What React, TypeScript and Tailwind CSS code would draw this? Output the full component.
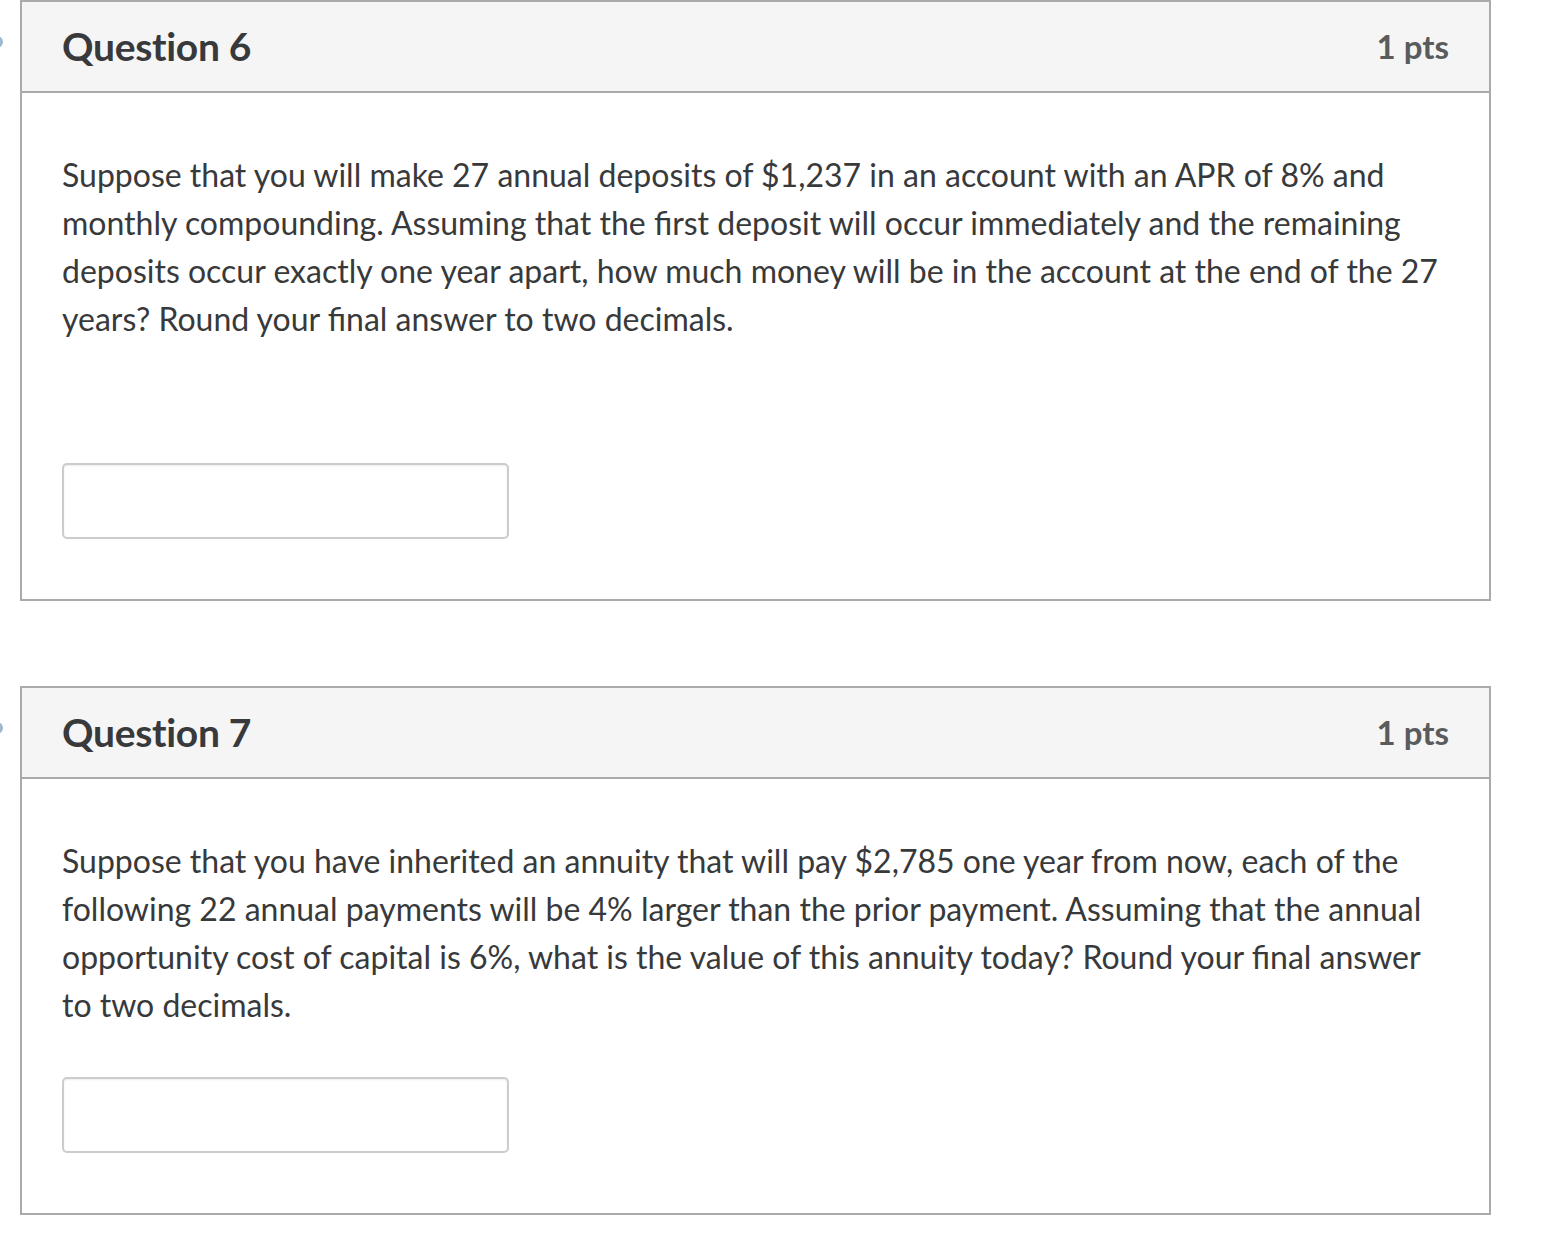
import React from "react";

type Q = {
  num: number;
  pts: string;
  text: string;
  gap: string;
};

const questions: Q[] = [
  {
    num: 6,
    pts: "1 pts",
    text: "Suppose that you will make 27 annual deposits of $1,237 in an account with an APR of 8% and monthly compounding. Assuming that the first deposit will occur immediately and the remaining deposits occur exactly one year apart, how much money will be in the account at the end of the 27 years? Round your final answer to two decimals.",
    gap: "mt-[120px]",
  },
  {
    num: 7,
    pts: "1 pts",
    text: "Suppose that you have inherited an annuity that will pay $2,785 one year from now, each of the following 22 annual payments will be 4% larger than the prior payment. Assuming that the annual opportunity cost of capital is 6%, what is the value of this annuity today? Round your final answer to two decimals.",
    gap: "mt-[48px]",
  },
];

function QuestionCard({ q }: { q: Q }) {
  return (
    <div className="relative">
      <div className="absolute -left-[29px] top-[36px] w-[12px] h-[12px] rounded-full bg-[#9fb8cf]" />
      <div className="w-[1471px] border-2 border-[#aaaaaa] bg-white">
        <div className="h-[91px] border-b-2 border-[#aaaaaa] bg-[#f5f5f5] flex items-center justify-between pl-[40px] pr-[40px]">
          <h2 className="text-[39px] font-bold text-[#38393b] tracking-[-0.3px]">Question {q.num}</h2>
          <div className="text-[33px] font-bold text-[#5a5b5d]">{q.pts}</div>
        </div>
        <div className="pl-[40px] pr-[40px] pt-[58px] pb-[60px]">
          <p className="text-[32px] leading-[48px] text-[#38393b]">{q.text}</p>
          <input
            type="text"
            className={`${q.gap} block w-[447px] h-[76px] border-2 border-[#cccccc] rounded-[5px] bg-white shadow-[inset_0_1px_2px_rgba(0,0,0,0.08)] outline-none`}
          />
        </div>
      </div>
    </div>
  );
}

export default function App() {
  return (
    <div className="bg-white min-h-[1250px] pl-[20px] flex flex-col gap-[85px]" style={{ fontFamily: "Lato, 'Noto Sans', sans-serif" }}>
      {questions.map((q) => (
        <QuestionCard key={q.num} q={q} />
      ))}
    </div>
  );
}
